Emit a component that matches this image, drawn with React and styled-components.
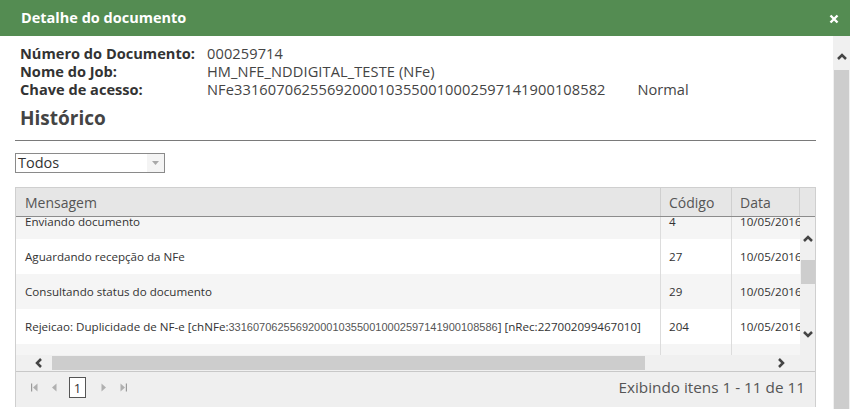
import React from 'react';
import styled, { createGlobalStyle } from 'styled-components';

const GlobalStyle = createGlobalStyle`
  html, body {
    margin: 0;
    padding: 0;
    overflow: hidden;
    background: #fff;
  }
  body {
    font-family: "Open Sans", "Liberation Sans", sans-serif;
    color: #333;
  }
`;

const info = [
  { label: 'Número do Documento:', value: '000259714' },
  { label: 'Nome do Job:', value: 'HM_NFE_NDDIGITAL_TESTE (NFe)' },
  { label: 'Chave de acesso:', value: 'NFe33160706255692000103550010002597141900108582', extra: 'Normal' },
];

const rows = [
  { msg: 'Enviando documento', code: '4', date: '10/05/2016 14:21:08' },
  { msg: 'Aguardando recepção da NFe', code: '27', date: '10/05/2016 14:21:09' },
  { msg: 'Consultando status do documento', code: '29', date: '10/05/2016 14:21:12' },
  {
    msg: 'Rejeicao: Duplicidade de NF-e [chNFe:',
    key: '33160706255692000103550010002597141900108586',
    tail: '] [nRec:227002099467010]',
    code: '204',
    date: '10/05/2016 14:21:15',
  },
  { msg: 'Documento rejeitado', code: '5', date: '10/05/2016 14:21:16' },
];

const Chevron = ({ dir }) => {
  const pts = {
    up: '1,6 5,2 9,6',
    down: '1,2 5,6 9,2',
    left: '6,1 2,5 6,9',
    right: '2,1 6,5 2,9',
  }[dir];
  const vertical = dir === 'up' || dir === 'down';
  return (
    <svg width={vertical ? 10 : 8} height={vertical ? 8 : 10} viewBox={vertical ? '0 0 10 8' : '0 0 8 10'}>
      <polyline points={pts} fill="none" stroke="#444" strokeWidth="2.5" />
    </svg>
  );
};

const PagerIcon = ({ kind }) => (
  <svg width="9" height="9" viewBox="0 0 9 9">
    {kind === 'first' && (
      <>
        <rect x="1" y="0.5" width="1.2" height="8" fill="#9a9a9a" />
        <polygon points="7.5,0.5 3,4.5 7.5,8.5" fill="#b0b0b0" />
      </>
    )}
    {kind === 'prev' && <polygon points="6.5,0.5 2,4.5 6.5,8.5" fill="#b0b0b0" />}
    {kind === 'next' && <polygon points="2.5,0.5 7,4.5 2.5,8.5" fill="#b0b0b0" />}
    {kind === 'last' && (
      <>
        <polygon points="1.5,0.5 6,4.5 1.5,8.5" fill="#b0b0b0" />
        <rect x="6.8" y="0.5" width="1.2" height="8" fill="#9a9a9a" />
      </>
    )}
  </svg>
);

const App = () => (
  <>
    <GlobalStyle />
    <Dialog>
      <TitleBar>
        <Title>Detalhe do documento</Title>
        <Close>
          <svg width="10" height="10" viewBox="0 0 10 10">
            <path d="M1.5 1.5 L8.5 8.5 M8.5 1.5 L1.5 8.5" stroke="#fff" strokeWidth="2.4" />
          </svg>
        </Close>
      </TitleBar>
      <Body>
        <Content>
          <InfoList>
            {info.map((item) => (
              <InfoRow key={item.label}>
                <InfoLabel>{item.label}</InfoLabel>
                <InfoValue>{item.value}</InfoValue>
                {item.extra && <InfoExtra>{item.extra}</InfoExtra>}
              </InfoRow>
            ))}
          </InfoList>
          <SectionTitle>Histórico</SectionTitle>
          <Select>
            <SelectText>Todos</SelectText>
            <SelectArrow>
              <svg width="7" height="4" viewBox="0 0 7 4">
                <polygon points="0,0 7,0 3.5,4" fill="#a8a8a8" />
              </svg>
            </SelectArrow>
          </Select>
          <Grid>
            <HeaderRow>
              <HeadCell width="644px">Mensagem</HeadCell>
              <HeadCell width="71px" divided>Código</HeadCell>
              <HeadCell grow divided>Data</HeadCell>
              <HeadSpacer />
            </HeaderRow>
            <GridBody>
              <Viewport>
                <RowList>
                  {rows.map((r, i) => (
                    <Row key={i} alt={i % 2 === 0}>
                      <Cell width="644px">
                        {r.msg}
                        {r.key && <KeyDigits>{r.key}</KeyDigits>}
                        {r.tail}
                      </Cell>
                      <Cell width="71px" divided>{r.code}</Cell>
                      <Cell grow divided>{r.date}</Cell>
                    </Row>
                  ))}
                </RowList>
              </Viewport>
              <VScroll>
                <VArrow top><Chevron dir="up" /></VArrow>
                <VThumb />
                <VTrack />
                <VArrow><Chevron dir="down" /></VArrow>
              </VScroll>
            </GridBody>
            <HScroll>
              <HArrowLeft><Chevron dir="left" /></HArrowLeft>
              <HThumb />
              <HTrack />
              <HArrowRight><Chevron dir="right" /></HArrowRight>
              <Corner />
            </HScroll>
            <Pager>
              <PagerNav>
                <PagerButton><PagerIcon kind="first" /></PagerButton>
                <PagerButton><PagerIcon kind="prev" /></PagerButton>
                <PageBox>1</PageBox>
                <PagerButton><PagerIcon kind="next" /></PagerButton>
                <PagerButton><PagerIcon kind="last" /></PagerButton>
              </PagerNav>
              <PagerInfo>Exibindo itens 1 - 11 de 11</PagerInfo>
            </Pager>
          </Grid>
        </Content>
        <PageScroll>
          <PageScrollArrow><Chevron dir="up" /></PageScrollArrow>
          <PageScrollThumb />
        </PageScroll>
      </Body>
    </Dialog>
  </>
);

const Dialog = styled.div`
  display: flex;
  flex-direction: column;
  width: 850px;
  height: 409px;
  overflow: hidden;
`;

const TitleBar = styled.div`
  display: flex;
  align-items: center;
  justify-content: space-between;
  height: 36px;
  flex: none;
  padding: 0 11px 0 21px;
  box-sizing: border-box;
  background-color: #548c52;
`;

const Title = styled.div`
  color: #fff;
  font-size: 14.5px;
  font-weight: 700;
  margin-top: -1px;
`;

const Close = styled.div`
  display: flex;
  align-items: center;
  margin-top: 1px;
`;

const Body = styled.div`
  display: flex;
  flex: 1;
  min-height: 0;
`;

const Content = styled.div`
  flex: 1;
  display: flex;
  flex-direction: column;
  padding: 8px 17px 0 15px;
  min-width: 0;
`;

const InfoList = styled.div`
  display: flex;
  flex-direction: column;
  padding-left: 5px;
`;

const InfoRow = styled.div`
  display: flex;
  height: 18px;
  line-height: 18px;
  font-size: 14.6px;
  white-space: nowrap;
`;

const InfoLabel = styled.div`
  width: 187px;
  font-weight: 700;
  color: #333;
`;

const InfoValue = styled.div`
  color: #444;
  letter-spacing: 0.1px;
`;

const InfoExtra = styled.div`
  color: #444;
  margin-left: 32px;
`;

const SectionTitle = styled.div`
  margin-top: 8px;
  padding-left: 5px;
  font-size: 19px;
  font-weight: 700;
  line-height: 24px;
  color: #444;
  padding-bottom: 10px;
  border-bottom: 1px solid #7a7a7a;
`;

const Select = styled.div`
  display: flex;
  align-items: center;
  width: 150px;
  height: 20px;
  margin-top: 12px;
  box-sizing: border-box;
  border: 1px solid #8a8a8a;
  background: #fff;
`;

const SelectText = styled.div`
  flex: 1;
  padding-left: 2px;
  font-size: 14.5px;
  color: #333;
  line-height: 18px;
`;

const SelectArrow = styled.div`
  display: flex;
  align-items: center;
  justify-content: center;
  width: 17px;
  height: 100%;
  background: #f4f4f4;
`;

const Grid = styled.div`
  display: flex;
  flex-direction: column;
  margin-top: 14px;
  border: 1px solid #cfcfcf;
  border-bottom: none;
`;

const HeaderRow = styled.div`
  display: flex;
  height: 28px;
  background: #e6e6e6;
  border-bottom: 1px solid #8c8c8c;
`;

const HeadCell = styled.div`
  display: flex;
  align-items: center;
  box-sizing: border-box;
  width: ${(p) => (p.grow ? 'auto' : p.width)};
  flex: ${(p) => (p.grow ? 1 : 'none')};
  padding-left: ${(p) => (p.divided ? '8px' : '9px')};
  padding-top: 1px;
  border-left: ${(p) => (p.divided ? '1px solid #cfcfcf' : 'none')};
  font-size: 14px;
  color: #555;
  white-space: nowrap;
`;

const HeadSpacer = styled.div`
  width: 15px;
  flex: none;
  border-left: 1px solid #cfcfcf;
`;

const GridBody = styled.div`
  display: flex;
  height: 138px;
`;

const Viewport = styled.div`
  flex: 1;
  overflow: hidden;
  min-width: 0;
`;

const RowList = styled.div`
  display: flex;
  flex-direction: column;
  margin-top: -13px;
`;

const Row = styled.div`
  display: flex;
  height: 35px;
  flex: none;
  background: ${(p) => (p.alt ? '#f5f5f5' : '#fff')};
`;

const Cell = styled.div`
  display: flex;
  align-items: center;
  box-sizing: border-box;
  width: ${(p) => (p.grow ? 'auto' : p.width)};
  flex: ${(p) => (p.grow ? 1 : 'none')};
  min-width: 0;
  overflow: hidden;
  padding-left: ${(p) => (p.divided ? '8px' : '9px')};
  border-left: ${(p) => (p.divided ? '1px solid #dcdcdc' : 'none')};
  font-size: 11.6px;
  color: #333;
  white-space: nowrap;
`;

const KeyDigits = styled.span`
  font-family: "Liberation Sans", Arial, sans-serif;
  font-size: 11px;
  color: #555;
`;

const VScroll = styled.div`
  display: flex;
  flex-direction: column;
  align-items: center;
  width: 15px;
  flex: none;
  background: #f0f0f0;
`;

const VArrow = styled.div`
  display: flex;
  align-items: center;
  justify-content: center;
  height: 17px;
  width: 100%;
  margin: ${(p) => (p.top ? '13px 0 0' : '0 0 13px')};
`;

const VThumb = styled.div`
  width: 14px;
  height: 24px;
  margin-top: 13px;
  background: #cdcdcd;
`;

const VTrack = styled.div`
  flex: 1;
`;

const HScroll = styled.div`
  display: flex;
  align-items: stretch;
  height: 16px;
  background: #f0f0f0;
`;

const HArrowLeft = styled.div`
  display: flex;
  align-items: center;
  width: 36px;
  padding-left: 19px;
  box-sizing: border-box;
`;

const HThumb = styled.div`
  width: 593px;
  background: #cdcdcd;
  margin: 1px 0;
`;

const HTrack = styled.div`
  flex: 1;
`;

const HArrowRight = styled.div`
  display: flex;
  align-items: center;
  justify-content: center;
  width: 38px;
`;

const Corner = styled.div`
  width: 15px;
  background: #f0f0f0;
`;

const Pager = styled.div`
  display: flex;
  align-items: flex-start;
  justify-content: space-between;
  height: 36px;
  box-sizing: border-box;
  padding: 5px 10px 0 9px;
  background: #efefef;
  border-top: 1px solid #c8c8c8;
`;

const PagerNav = styled.div`
  display: flex;
  align-items: center;
  gap: 2px;
`;

const PagerButton = styled.div`
  display: flex;
  align-items: center;
  justify-content: center;
  width: 18px;
  height: 21px;
`;

const PageBox = styled.div`
  display: flex;
  align-items: center;
  justify-content: center;
  width: 17px;
  height: 21px;
  box-sizing: border-box;
  margin: 0 6px 0 4px;
  border: 1px solid #555;
  background: #fff;
  font-size: 13px;
  color: #333;
`;

const PagerInfo = styled.div`
  font-size: 15.3px;
  color: #555;
  line-height: 18px;
  margin-top: 1px;
`;

const PageScroll = styled.div`
  display: flex;
  flex-direction: column;
  align-items: center;
  width: 17px;
  flex: none;
  background: #f0f0f0;
`;

const PageScrollArrow = styled.div`
  display: flex;
  align-items: center;
  justify-content: center;
  height: 34px;
  padding-top: 8px;
  box-sizing: border-box;
`;

const PageScrollThumb = styled.div`
  flex: 1;
  width: 15px;
  background: #cdcdcd;
`;

export default App;
